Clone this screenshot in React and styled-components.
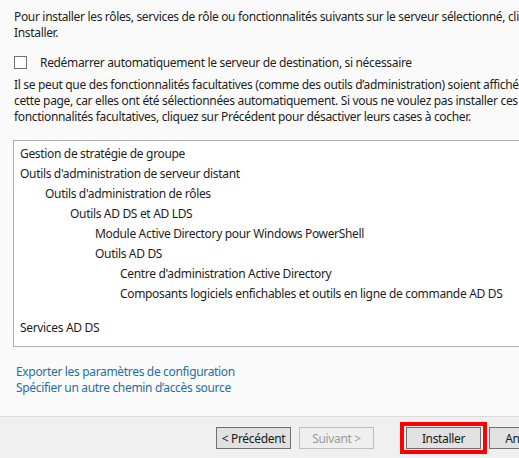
import React from 'react';
import styled, { createGlobalStyle } from 'styled-components';

const GlobalStyle = createGlobalStyle`
  html, body {
    margin: 0;
    padding: 0;
    background: #fafafa;
  }
  body {
    font-family: "Noto Sans", "Open Sans", sans-serif;
    font-size: 12px;
    letter-spacing: -0.33px;
    color: #1e1e1e;
  }
`;

// --- Styled Components ---

const Fenetre = styled.div`
  width: 519px;
  height: 458px;
  overflow: hidden;
  display: flex;
  flex-direction: column;
  background: #fafafa;
`;

const Contenu = styled.div`
  flex: 1;
  padding: 9px 0 0 14px;
  display: flex;
  flex-direction: column;
`;

const Ligne = styled.div`
  white-space: nowrap;
  line-height: 16px;
`;

const CaseRow = styled.label`
  display: flex;
  align-items: center;
  gap: 13px;
  height: 16px;
  margin-top: 13px;
  white-space: nowrap;
`;

const CaseACocher = styled.span`
  width: 11px;
  height: 11px;
  border: 1px solid #707070;
  background: #fff;
  flex-shrink: 0;
`;

const Paragraphe = styled.div`
  margin-top: 7px;
`;

const ListeBox = styled.div`
  margin-top: 15px;
  margin-left: -1px;
  width: 560px;
  height: 207px;
  border: 1px solid #adadad;
  border-right: none;
  background: #fff;
  padding-top: 3px;
  box-sizing: border-box;
`;

const Element = styled.div`
  height: 20px;
  line-height: 20px;
  white-space: nowrap;
  padding-left: ${(p) => 6 + p.$niveau * 25}px;
  margin-top: ${(p) => (p.$espace ? 14 : 0)}px;
`;

const Liens = styled.div`
  margin-top: 17px;
  padding-left: 2px;
`;

const Lien = styled.a`
  display: block;
  color: #1f6fa6;
  line-height: 16px;
  text-decoration: none;
  cursor: pointer;
  white-space: nowrap;
`;

const Pied = styled.div`
  height: 42px;
  border-top: 1px solid #dcdcdc;
  background: #f0f0f0;
  display: flex;
  align-items: flex-start;
  padding: 10px 0 0 216px;
  box-sizing: border-box;
`;

const Bouton = styled.button`
  width: 75px;
  height: 22px;
  flex-shrink: 0;
  font-family: "Noto Sans", "Open Sans", sans-serif;
  font-size: 12px;
  letter-spacing: -0.33px;
  padding: 0;
  border: 1px solid ${(p) => (p.disabled ? '#bfbfbf' : '#707070')};
  background: ${(p) => (p.disabled ? '#efefef' : '#e1e1e1')};
  color: ${(p) => (p.disabled ? '#9a9a9a' : '#1a1a1a')};
  margin-left: ${(p) => p.$gauche || 0}px;
`;

const Surlignage = styled.div`
  flex-shrink: 0;
  border: 4px solid #ff0000;
  padding: 1px 2px;
  margin: -5px 0 0 26px;
  display: flex;
`;

const elements = [
  { texte: 'Gestion de stratégie de groupe', niveau: 0 },
  { texte: "Outils d'administration de serveur distant", niveau: 0 },
  { texte: "Outils d'administration de rôles", niveau: 1 },
  { texte: 'Outils AD DS et AD LDS', niveau: 2 },
  { texte: 'Module Active Directory pour Windows PowerShell', niveau: 3 },
  { texte: 'Outils AD DS', niveau: 3 },
  { texte: "Centre d'administration Active Directory", niveau: 4 },
  { texte: 'Composants logiciels enfichables et outils en ligne de commande AD DS', niveau: 4 },
  { texte: 'Services AD DS', niveau: 0, espace: true },
];

export default function App() {
  return (
    <>
      <GlobalStyle />
      <Fenetre>
        <Contenu>
          <Ligne>
            Pour installer les rôles, services de rôle ou fonctionnalités suivants sur le serveur sélectionné, cliquez sur
          </Ligne>
          <Ligne>Installer.</Ligne>
          <CaseRow>
            <CaseACocher />
            Redémarrer automatiquement le serveur de destination, si nécessaire
          </CaseRow>
          <Paragraphe>
            <Ligne>
              Il se peut que des fonctionnalités facultatives (comme des outils d’administration) soient affichées sur
            </Ligne>
            <Ligne>
              cette page, car elles ont été sélectionnées automatiquement. Si vous ne voulez pas installer ces
            </Ligne>
            <Ligne>
              fonctionnalités facultatives, cliquez sur Précédent pour désactiver leurs cases à cocher.
            </Ligne>
          </Paragraphe>
          <ListeBox>
            {elements.map((el) => (
              <Element key={el.texte} $niveau={el.niveau} $espace={el.espace}>
                {el.texte}
              </Element>
            ))}
          </ListeBox>
          <Liens>
            <Lien>Exporter les paramètres de configuration</Lien>
            <Lien>Spécifier un autre chemin d’accès source</Lien>
          </Liens>
        </Contenu>
        <Pied>
          <Bouton>&lt; Précédent</Bouton>
          <Bouton disabled $gauche={8}>Suivant &gt;</Bouton>
          <Surlignage>
            <Bouton>Installer</Bouton>
          </Surlignage>
          <Bouton $gauche={2}>Annuler</Bouton>
        </Pied>
      </Fenetre>
    </>
  );
}
